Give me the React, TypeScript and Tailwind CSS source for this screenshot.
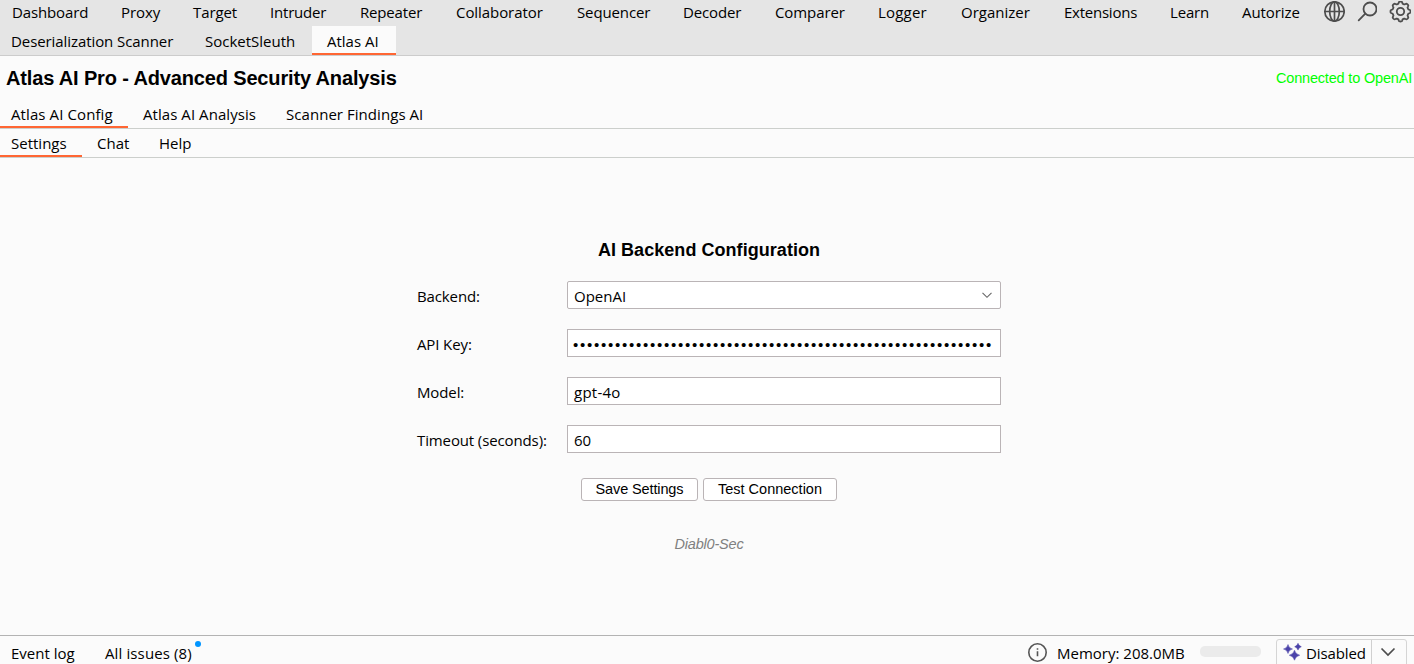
import React from "react";

const mainTabs: [string, string][] = [
  ["Dashboard", "w-[109px] tracking-[-0.13px]"],
  ["Proxy", "w-[72px] tracking-[-0.1px]"],
  ["Target", "w-[77px] tracking-[-0.1px]"],
  ["Intruder", "w-[90px] tracking-[-0.2px]"],
  ["Repeater", "w-[96px] tracking-[-0.18px]"],
  ["Collaborator", "w-[121px] tracking-[-0.07px]"],
  ["Sequencer", "w-[106px] tracking-[-0.12px]"],
  ["Decoder", "w-[92px] tracking-[-0.14px]"],
  ["Comparer", "w-[103px] tracking-[-0.08px]"],
  ["Logger", "w-[83px] tracking-[0.2px]"],
  ["Organizer", "w-[103px]"],
  ["Extensions", "w-[106px] tracking-[-0.24px]"],
  ["Learn", "w-[72px] tracking-[-0.16px]"],
  ["Autorize", "w-[74px] tracking-[-0.08px]"],
];

function Globe() {
  return (
    <svg className="h-[22px] w-[22px]" viewBox="0 0 22 22" fill="none" stroke="#4d4d4d" strokeWidth="1.7">
      <circle cx="11.5" cy="10.5" r="9.7" />
      <ellipse cx="11.5" cy="10.5" rx="4.8" ry="9.7" />
      <path d="M1.700 10.500h19.600M11.500 0.700v19.600" />
    </svg>
  );
}

function Search() {
  return (
    <svg className="h-[22px] w-[20px]" viewBox="0 0 20 22" fill="none" stroke="#4d4d4d" strokeWidth="1.8" strokeLinecap="round">
      <circle cx="13" cy="8" r="6.500" />
      <path d="M8.300 12.700L1.700 19.300" />
    </svg>
  );
}

function Gear() {
  const points = Array.from({ length: 96 }, (_, i) => {
    const a = (i / 96) * Math.PI * 2;
    const r = 9.0 + 1.0 * Math.tanh(2.5 * Math.cos(8 * a));
    return `${(11.5 + r * Math.cos(a)).toFixed(2)},${(10.5 + r * Math.sin(a)).toFixed(2)}`;
  }).join(" ");
  return (
    <svg className="h-[22px] w-[22px]" viewBox="0 0 22 22" fill="none" stroke="#4d4d4d" strokeWidth="1.8" strokeLinejoin="round">
      <polygon points={points} />
      <circle cx="11.5" cy="10.5" r="3.7" />
    </svg>
  );
}

function Sparkles() {
  return (
    <svg className="h-[18px] w-[19px]" viewBox="0 0 19 18" fill="#4b43a9" stroke="#4b43a9" strokeWidth="0.5" strokeLinejoin="round">
      <path d="M5 1.5Q5.8 5.2 9.5 6Q5.8 6.800 5 10.500Q4.200 6.800 0.500 6Q4.200 5.200 5 1.500Z" />
      <path d="M15 0.300Q15.700 3 18.300 3.700Q15.700 4.400 15 7.100Q14.300 4.400 11.700 3.700Q14.300 3 15 0.300Z" />
      <path d="M11.500 7.200Q12.500 11.200 16.700 12.200Q12.500 13.200 11.500 17.200Q10.500 13.200 6.300 12.200Q10.500 11.200 11.500 7.200Z" />
    </svg>
  );
}

function Label({ children }: { children: React.ReactNode }) {
  return <div className="w-[150px] pt-[2px] tracking-[-0.12px]">{children}</div>;
}

const field = "flex h-[28px] w-[434px] items-center border border-[#bab4b6] bg-white pl-[6px] pt-[2px]";

export default function App() {
  return (
    <div className="flex h-[664px] w-[1414px] flex-col overflow-hidden whitespace-nowrap bg-[#fbfbfb] font-['Open_Sans','Noto_Sans',sans-serif] text-[15px] leading-[20px] text-black">
      <header className="h-[56px] shrink-0 border-b border-[#cccccc] bg-[#e5e5e5]">
        <div className="flex h-[26px] pl-[12px]">
          {mainTabs.map(([name, width]) => (
            <div key={name} className={`${width} shrink-0 pt-[2px]`}>
              <span>{name}</span>
            </div>
          ))}
          <div className="flex w-[98px] shrink-0 items-start pl-[7px] pt-px">
            <Globe />
            <span className="w-[12px]" />
            <Search />
            <span className="w-[12px]" />
            <Gear />
          </div>
        </div>
        <div className="flex h-[29px]">
          <div className="w-[194px] pl-[11px] pt-[5px] tracking-[-0.08px]">Deserialization Scanner</div>
          <div className="w-[118px] pl-[11px] pt-[5px]">SocketSleuth</div>
          <div className="w-[84px] border-b-2 border-[#ff6633] bg-[#fbfbfb] pl-[15px] pt-[5px]">Atlas AI</div>
        </div>
      </header>
      <div className="flex h-[44px] shrink-0 items-center justify-between pl-[6px] pr-[2px] font-['Liberation_Sans',sans-serif]">
        <h1 className="text-[20px] font-bold tracking-[-0.15px] text-black">Atlas AI Pro - Advanced Security Analysis</h1>
        <span className="text-[14.500px] tracking-[-0.180px] text-[#00ff00]">Connected to OpenAI</span>
      </div>
      <nav className="flex h-[29px] shrink-0 border-b border-[#cccfcc]">
        <div className="w-[128px] border-b-2 border-[#ff6633] pl-[11px] pt-[4px] tracking-[0.1px]">Atlas AI Config</div>
        <div className="w-[143px] pl-[15px] pt-[4px] tracking-[0.06px]">Atlas AI Analysis</div>
        <div className="pl-[15px] pt-[4px] tracking-[0.05px]">Scanner Findings AI</div>
      </nav>
      <nav className="flex h-[29px] shrink-0 border-b border-[#cccfcc]">
        <div className="w-[82px] border-b-2 border-[#ff6633] pl-[11px] pt-[4px]">Settings</div>
        <div className="w-[62px] pl-[15px] pt-[4px]">Chat</div>
        <div className="pl-[15px] pt-[4px]">Help</div>
      </nav>
      <main className="flex flex-1 flex-col pl-[417px] pt-[82px]">
        <h2 className="w-[584px] text-center font-['Liberation_Sans',sans-serif] text-[18px] font-bold tracking-[0.050px] text-black">AI Backend Configuration</h2>
        <div className="mt-[21px] flex flex-col gap-[20px]">
          <div className="flex items-center">
            <Label>Backend:</Label>
            <div className={`${field} justify-between rounded-[2px] pr-[7px]`}>
              <span>OpenAI</span>
              <svg className="h-[12px] w-[12px]" viewBox="0 0 12 12" fill="none" stroke="#666" strokeWidth="1.1">
                <path d="M1.500 2.800L6 7.300L10.500 2.800" />
              </svg>
            </div>
          </div>
          <div className="flex items-center">
            <Label>API Key:</Label>
            <div className={field}>
              <span className="-ml-px pt-[2px] font-['Liberation_Sans',sans-serif] text-[15px] tracking-[1.750px] text-black">{"•".repeat(60)}</span>
            </div>
          </div>
          <div className="flex items-center">
            <Label>Model:</Label>
            <div className={`${field} tracking-[0.25px]`}>gpt-4o</div>
          </div>
          <div className="flex items-center">
            <Label>Timeout (seconds):</Label>
            <div className={field}>60</div>
          </div>
        </div>
        <div className="mt-[25px] flex gap-[5px] pl-[164px] font-['Liberation_Sans',sans-serif] text-[14.500px] text-black">
          <button className="flex h-[23px] w-[117px] items-center justify-center rounded-[3px] border border-[#bab4b6] bg-white pb-[2px] tracking-[-0.120px]">Save Settings</button>
          <button className="flex h-[23px] w-[134px] items-center justify-center rounded-[3px] border border-[#bab4b6] bg-white pb-[2px]">Test Connection</button>
        </div>
        <div className="mt-[33px] w-[584px] text-center font-['Liberation_Sans',sans-serif] text-[14.500px] italic tracking-[-0.200px] text-[#808080]">Diabl0-Sec</div>
      </main>
      <footer className="flex h-[29px] shrink-0 border-t border-[#b3b3b3]">
        <div className="w-[105px] pl-[11px] pt-[7px]">Event log</div>
        <div className="w-[90px] pt-[7px] tracking-[0.12px]">All issues (8)</div>
        <div className="mt-[5px] h-[6px] w-[6px] rounded-full bg-[#0095ff]" />
        <svg className="ml-[827px] mt-[6px] h-[20px] w-[20px] shrink-0" viewBox="0 0 20 20" fill="none" stroke="#555" strokeWidth="1.600">
          <circle cx="9.500" cy="10.500" r="8.700" />
          <path d="M9.500 9.300v5M9.500 6.200v1.600" />
        </svg>
        <div className="w-[152px] shrink-0 pl-[9px] pt-[7px]">Memory: 208.0MB</div>
        <div className="mt-[10px] h-[11px] w-[61px] shrink-0 rounded-[5px] bg-[#ebebeb]" />
        <div className="ml-[15px] mt-[3px] flex h-[40px] w-[131px] shrink-0 rounded-[3px] border border-[#d5d5d5]">
          <div className="flex w-[95px] shrink-0 border-r border-[#d0d0d0] pl-[6px] pt-[3px]">
            <Sparkles />
            <span className="pl-[4px] tracking-[-0.12px]">Disabled</span>
          </div>
          <svg className="ml-[8px] mt-[5px] h-[14px] w-[16px]" viewBox="0 0 16 14" fill="none" stroke="#4d4d4d" strokeWidth="1.700">
            <path d="M1.500 3.500L8 10L14.500 3.500" />
          </svg>
        </div>
      </footer>
    </div>
  );
}
